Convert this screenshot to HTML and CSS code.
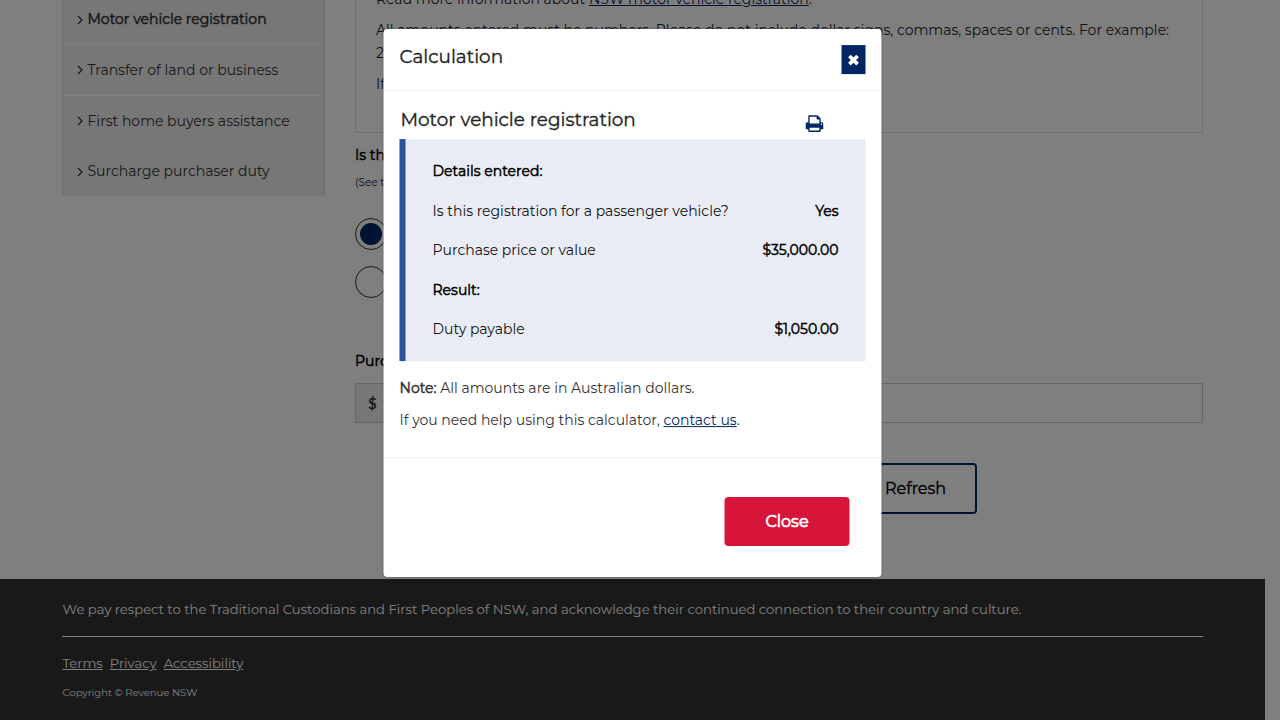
FILE: index.html
```html
<!DOCTYPE html>
<html lang="en">
<head>
<meta charset="utf-8">
<title>Motor vehicle registration calculator</title>
<link rel="stylesheet" href="styles.css">
</head>
<body>
<div class="page">
  <div class="columns">
    <nav class="sidenav">
      <a class="nav-item current"><svg class="chevron" viewBox="0 0 6 10"><path d="M1 1l4 4-4 4"/></svg><span>Motor vehicle registration</span></a>
      <a class="nav-item"><svg class="chevron" viewBox="0 0 6 10"><path d="M1 1l4 4-4 4"/></svg><span>Transfer of land or business</span></a>
      <a class="nav-item"><svg class="chevron" viewBox="0 0 6 10"><path d="M1 1l4 4-4 4"/></svg><span>First home buyers assistance</span></a>
      <a class="nav-item last"><svg class="chevron" viewBox="0 0 6 10"><path d="M1 1l4 4-4 4"/></svg><span>Surcharge purchaser duty</span></a>
    </nav>
    <main class="main">
      <section class="intro">
        <p class="intro-first"><span>Read more information about </span><a class="link">NSW motor vehicle registration</a>.</p>
        <p class="intro-text">All amounts entered must be numbers. Please do not include dollar signs, commas, spaces or cents. For example: 20500</p>
        <p class="intro-help"><a class="plain-link">If</a></p>
      </section>
      <div class="question">Is this</div>
      <div class="hint">(See the</div>
      <div class="radio checked"></div>
      <div class="radio"></div>
      <div class="price-label">Purchase</div>
      <div class="price-field"><span class="prefix">$</span><span class="input"></span></div>
      <div class="actions"><span class="refresh">Refresh</span></div>
    </main>
  </div>
  <footer class="footer">
    <p class="respect">We pay respect to the Traditional Custodians and First Peoples of NSW, and acknowledge their continued connection to their country and culture.</p>
    <div class="footer-links"><a>Terms</a><a>Privacy</a><a>Accessibility</a></div>
    <div class="copyright">Copyright © Revenue NSW</div>
  </footer>
</div>
<div class="backdrop">
  <div class="modal">
    <header class="modal-header">
      <h4 class="title">Calculation</h4>
      <span class="close-x"><svg viewBox="0 0 12 12"><path d="M2.500 2.500l7 7M9.500 2.500l-7 7"/></svg></span>
    </header>
    <div class="modal-body">
      <div class="heading-row">
        <h4 class="heading">Motor vehicle registration</h4>
        <svg class="print" viewBox="0 0 1664 1536"><path d="M384 1408h896v-256H384v256zm0-640h896V384h-160q-40 0-68-28t-28-68V128H384v640zm1152 64q0-26-19-45t-45-19-45 19-19 45 19 45 45 19 45-19 19-45zm128 0v416q0 13-9.500 22.500t-22.500 9.500h-224v160q0 40-28 68t-68 28H352q-40 0-68-28t-28-68v-160H32q-13 0-22.500-9.500T0 1248V832q0-79 56.500-135.500T192 640h64V96q0-40 28-68t68-28h672q40 0 88 20t76 48l152 152q28 28 48 76t20 88v256h64q79 0 135.500 56.500T1664 832z"/></svg>
      </div>
      <div class="result">
        <div class="row"><b>Details entered:</b></div>
        <div class="row"><span>Is this registration for a passenger vehicle?</span><b>Yes</b></div>
        <div class="row"><span>Purchase price or value</span><b>$35,000.00</b></div>
        <div class="row"><b>Result:</b></div>
        <div class="row"><span>Duty payable</span><b>$1,050.00</b></div>
      </div>
      <p class="note"><b>Note:</b> All amounts are in Australian dollars.</p>
      <p class="help">If you need help using this calculator, <a class="link">contact us</a>.</p>
    </div>
    <div class="modal-footer"><span class="close-btn">Close</span></div>
  </div>
</div>
</body>
</html>
```
FILE: styles.css
```css
* { box-sizing: border-box; }
html, body { margin: 0; height: 720px; overflow: hidden; background: #fff; }
body { font-family: Montserrat, Inter, "Liberation Sans", sans-serif; font-size: 14px; line-height: 23px; color: #222; }
p, h4 { margin: 0; }
a { color: inherit; }
b, .current, .question, .price-label { font-weight: 400; -webkit-text-stroke: .5px currentColor; }
.page { width: 1265px; height: 720px; display: flex; flex-direction: column; }
.columns { display: flex; gap: 30px; height: 579px; flex: none; padding: 0 62px; }
.sidenav { width: 263px; height: 196px; border: 1px solid #dcdcdc; border-width: 0 1px; }
.nav-item { display: flex; align-items: center; gap: 4.5px; height: 51px; padding-left: 14px; background: #efefef; border-bottom: 1px solid #fff; color: #333; }
.nav-item.current { height: 45px; padding-bottom: 5px; }
.nav-item.last { height: 49px; border-bottom: 0; }
.nav-item:nth-child(3) { border-bottom-color: #e4e4e4; }
.chevron { width: 6px; height: 10px; flex: none; fill: none; stroke: #222; stroke-width: 1.1; }
.main { width: 848px; flex: none; white-space: nowrap; }
.intro { height: 133px; border: 1px solid #dcdcdc; border-top: 0; padding-left: 20px; padding-right: 20px; overflow: hidden; }
.intro-first { margin-top: -12px; height: 31px; }
.intro-text { white-space: normal; height: 54px; width: 810px; }
.link { color: #002664; text-decoration: underline; }
.plain-link { color: #002664; }
.question { margin-top: 11px; height: 23px; color: #000; }
.hint { font-size: 10.5px; height: 23px; margin-top: 4px; }
.radio { width: 32px; height: 32px; border: 1px solid #333; border-radius: 50%; margin-top: 16px; padding: 4px; }
.radio.checked { margin-top: 24px; }
.radio.checked::before { content: ""; display: block; width: 22px; height: 22px; border-radius: 50%; background: #002664; }
.price-label { margin-top: 52px; color: #000; }
.price-field { display: flex; height: 40px; margin-top: 10px; border: 1px solid #ccc; }
.prefix { width: 40px; padding-left: 12px; background: #eee; font-family: Lato, sans-serif; font-size: 15px; line-height: 38px; -webkit-text-stroke: .3px #222; }
.input { flex: 1; }
.actions { display: flex; margin-top: 40px; padding-left: 466px; }
.refresh { width: 156px; height: 51px; border: 2px solid #002664; border-radius: 4px; padding-left: 62px; line-height: 48px; font-size: 16px; -webkit-text-stroke: .35px #000; color: #000; }
.footer { flex: 1; background: #333; color: #fff; padding: 18px 62px 0; border-top: 1px solid #333; }
.respect { height: 39px; padding-left: .5px; font-size: 13.17px; border-bottom: 1px solid #fff; white-space: nowrap; line-height: 22px; }
.footer-links { display: flex; gap: 7px; margin-top: 15px; padding-left: .5px; font-size: 13.15px; line-height: 22px; text-decoration: underline; }
.copyright { font-size: 10px; line-height: 16px; margin-top: 11px; padding-left: .5px; }
.backdrop { position: absolute; inset: 0; background: rgba(0,0,0,.5); display: flex; align-items: flex-start; padding: 29px 0 0 384px; }
.modal { width: 498px; height: 548px; background: #fff; border-radius: 4px; box-shadow: 0 0 0 1px rgba(0,0,0,.15); color: #333; transform: translate(-.5px, .1px); }
.modal-header { height: 62px; display: flex; justify-content: space-between; align-items: flex-start; padding: 16px 16px 0; border-bottom: 1px solid #eee; }
.title, .heading { font-size: 18.4px; line-height: 24px; font-weight: 400; -webkit-text-stroke: .35px currentColor; color: #222; }
.heading { padding-top: 1px; }
.close-x { width: 24px; height: 29px; background: #002664; display: flex; align-items: center; justify-content: center; padding-top: 1px; }
.close-x svg { width: 14px; height: 14px; stroke: #fff; stroke-width: 3.2; }
.modal-body { height: 367px; padding: 16px 16px 0; border-bottom: 1px solid #eee; }
.heading-row { height: 32px; display: flex; justify-content: space-between; padding: 0 42px 0 1px; }
.print { width: 18px; height: 17px; margin-top: 8px; fill: #002664; }
.result { height: 222px; background: #e9ecf4; border-left: 6px solid #2e5299; padding: 13px 27px 0; color: #111; }
.row { display: flex; justify-content: space-between; height: 39.5px; line-height: 38px; }
.row b { color: #000; }
.note { margin-top: 16px; }
.help { margin-top: 9px; }
.modal-footer { display: flex; justify-content: flex-end; padding: 39px 32px 0; }
.close-btn { width: 125px; height: 49px; border-radius: 4px; background: #d7153a; color: #fff; font-size: 16px; line-height: 49px; text-align: center; -webkit-text-stroke: .7px #fff; }
```
